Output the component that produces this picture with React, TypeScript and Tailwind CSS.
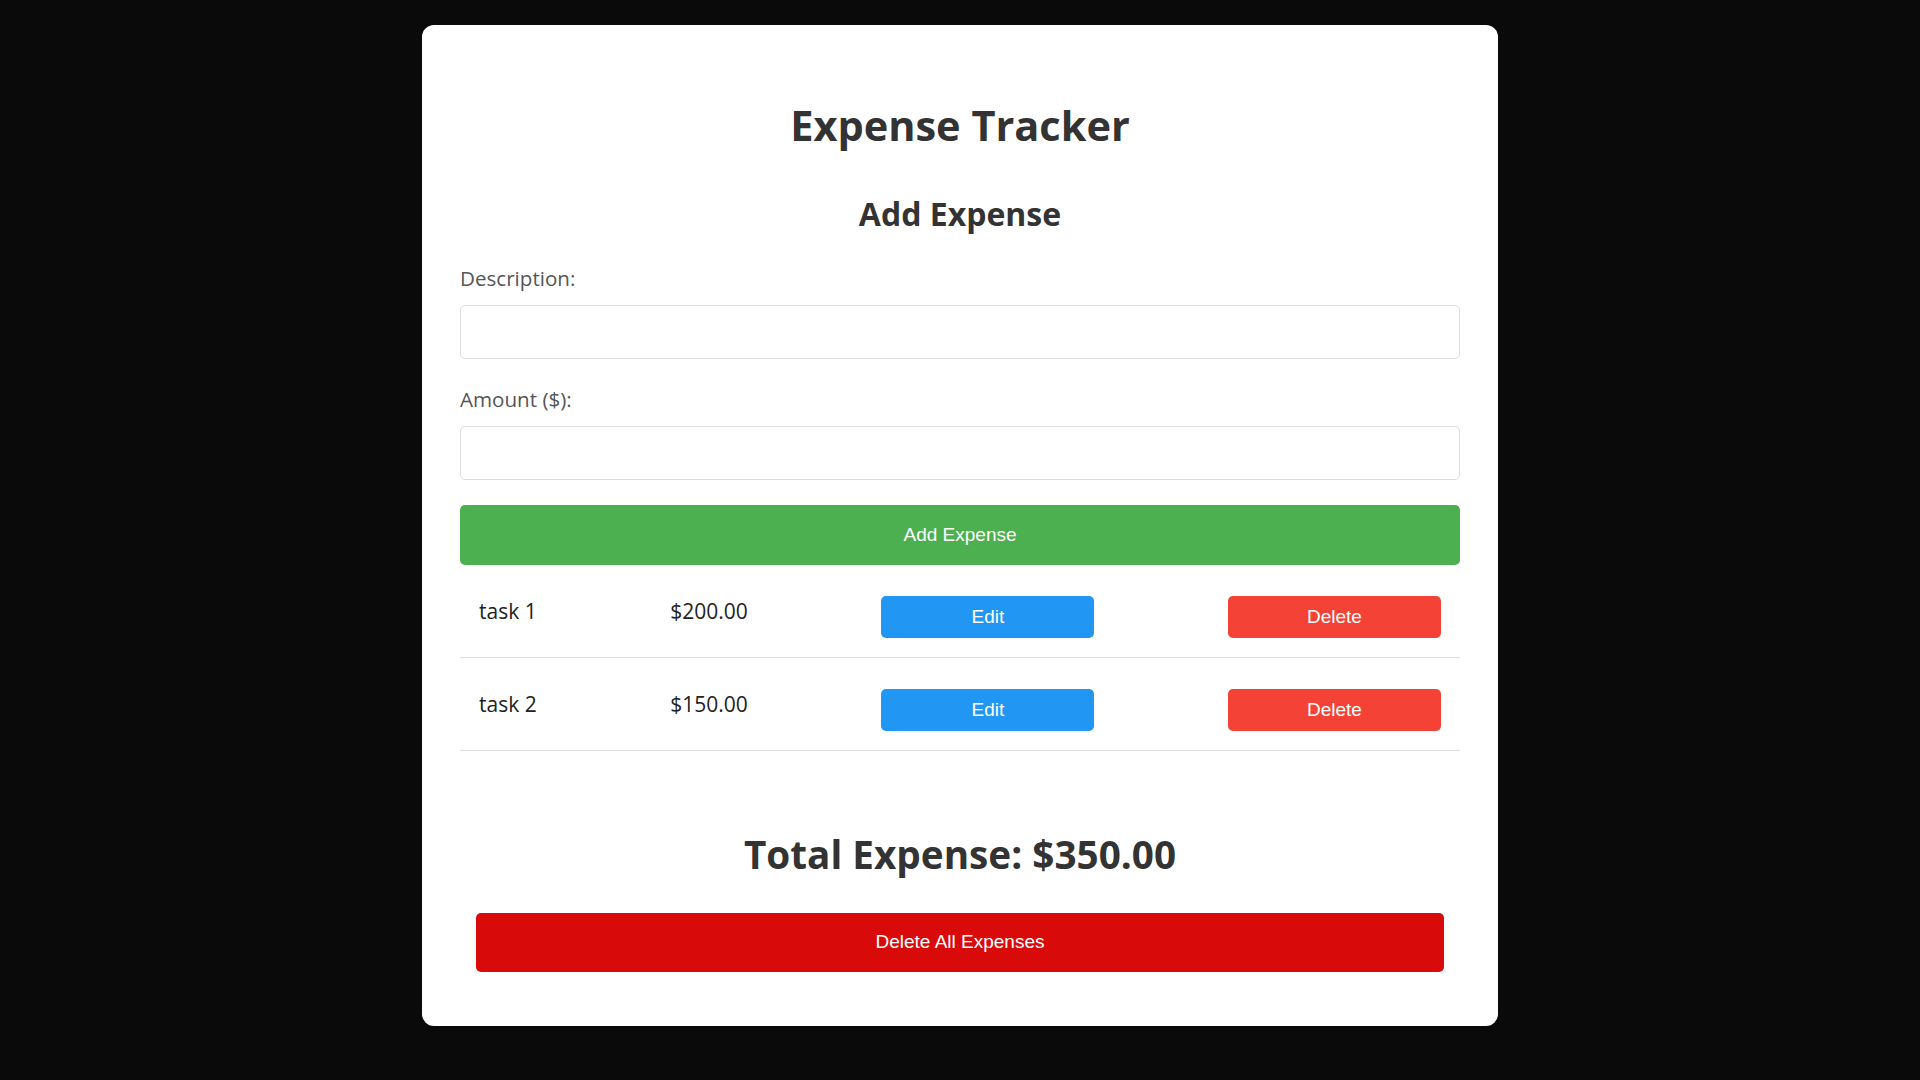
import React, { useState } from 'react';

interface Expense {
  id: number;
  description: string;
  amount: number;
}

const App: React.FC = () => {
  const [expenses, setExpenses] = useState<Expense[]>([
    { id: 1, description: 'task 1', amount: 200 },
    { id: 2, description: 'task 2', amount: 150 }
  ]);
  const [description, setDescription] = useState('');
  const [amount, setAmount] = useState('');

  const total = expenses.reduce((sum, e) => sum + e.amount, 0);

  const handleAdd = () => {
    if (!description || !amount) return;
    setExpenses([...expenses, { id: Date.now(), description, amount: parseFloat(amount) }]);
    setDescription('');
    setAmount('');
  };

  return (
    <div className="min-h-screen bg-[#0a0a0a] flex justify-center pt-[25px] pb-[54px]">
      <div className="w-[1076px] bg-white rounded-[12px] px-[38px] pt-[75px] pb-[54px] font-['Open_Sans',sans-serif] text-[#333]">
        <h1 className="text-center text-[41.5px] leading-[50px] font-bold">Expense Tracker</h1>
        <h2 className="mt-[44px] text-center text-[32px] leading-[40px] font-bold">Add Expense</h2>

        <label className="block mt-[30px] text-[20.6px] leading-[28px] text-[#555]">Description:</label>
        <input
          type="text"
          value={description}
          onChange={(e) => setDescription(e.target.value)}
          className="block w-full mt-[13px] h-[54px] px-3 border border-[#ddd] rounded-[5px] outline-none text-[18px]"
        />

        <label className="block mt-[26px] text-[20.6px] leading-[28px] text-[#555]">Amount ($):</label>
        <input
          type="number"
          value={amount}
          onChange={(e) => setAmount(e.target.value)}
          className="block w-full mt-[13px] h-[54px] px-3 border border-[#ddd] rounded-[5px] outline-none text-[18px]"
        />

        <button
          onClick={handleAdd}
          className="block w-full mt-[25px] h-[60px] bg-[#4caf50] text-white rounded-[5px] font-['Liberation_Sans',Arial,sans-serif] text-[19px]"
        >
          Add Expense
        </button>

        <ul>
          {expenses.map(e => (
            <li key={e.id} className="h-[93px] border-b border-[#ddd] flex items-center justify-between px-[19px] text-[21px] text-[#222]">
              <span className="mt-[1px]">{e.description}</span>
              <span className="mt-[1px]">${e.amount.toFixed(2)}</span>
              <button className="mt-[12px] w-[213px] h-[42px] bg-[#2196f3] text-white rounded-[5px] font-['Liberation_Sans',Arial,sans-serif] text-[19px]">Edit</button>
              <button
                onClick={() => setExpenses(expenses.filter(x => x.id !== e.id))}
                className="mt-[12px] w-[213px] h-[42px] bg-[#f44336] text-white rounded-[5px] font-['Liberation_Sans',Arial,sans-serif] text-[19px]"
              >
                Delete
              </button>
            </li>
          ))}
        </ul>

        <h2 className="mt-[80px] text-center text-[38.7px] leading-[46px] font-bold">Total Expense: ${total.toFixed(2)}</h2>

        <div className="px-4 mt-[36px]">
          <button
            onClick={() => setExpenses([])}
            className="block w-full h-[59px] bg-[#d90a0a] text-white rounded-[5px] font-['Liberation_Sans',Arial,sans-serif] text-[19px]"
          >
            Delete All Expenses
          </button>
        </div>
      </div>
    </div>
  );
};

export default App;
